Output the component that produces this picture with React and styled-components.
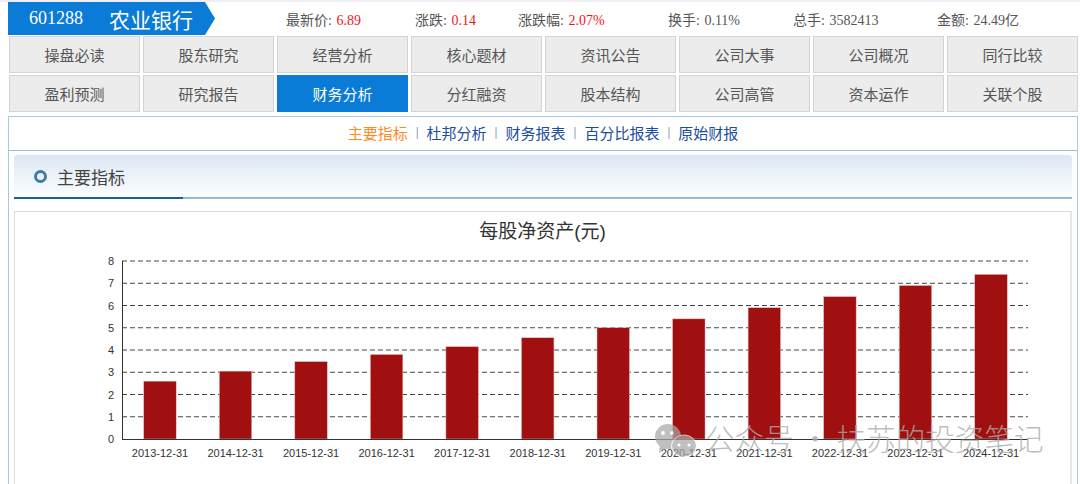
import React from 'react'
import styled, { createGlobalStyle } from 'styled-components'

const tabRows = [
  ['操盘必读', '股东研究', '经营分析', '核心题材', '资讯公告', '公司大事', '公司概况', '同行比较'],
  ['盈利预测', '研究报告', '财务分析', '分红融资', '股本结构', '公司高管', '资本运作', '关联个股'],
]
const stats = [
  { label: '最新价', value: '6.89', red: true, width: 129 },
  { label: '涨跌', value: '0.14', red: true, width: 103 },
  { label: '涨跌幅', value: '2.07%', red: true, width: 150 },
  { label: '换手', value: '0.11%', width: 125 },
  { label: '总手', value: '3582413', width: 144 },
  { label: '金额', value: '24.49亿', width: 120 },
]
const subLinks = ['主要指标', '杜邦分析', '财务报表', '百分比报表', '原始财报']
const bars = [
  ['2013-12-31', 2.6], ['2014-12-31', 3.05], ['2015-12-31', 3.48], ['2016-12-31', 3.8],
  ['2017-12-31', 4.15], ['2018-12-31', 4.55], ['2019-12-31', 5.0], ['2020-12-31', 5.4],
  ['2021-12-31', 5.9], ['2022-12-31', 6.4], ['2023-12-31', 6.9], ['2024-12-31', 7.4],
]

function Chart() {
  const zero = 189
  const step = 22.25
  return (
    <ChartSvg width="1056" height="220" viewBox="0 0 1056 220">
      {[1, 2, 3, 4, 5, 6, 7, 8].map((n) => (
        <line key={n} x1="107" x2="1013" y1={zero - n * step} y2={zero - n * step} stroke="#444" strokeWidth="1" strokeDasharray="5 3" />
      ))}
      {bars.map(([date, v], i) => (
        <g key={date}>
          <rect x={128.7 + i * 75.55} y={zero - v * step} width="32.5" height={v * step} fill="#a01010" stroke="#e8c4c4" strokeWidth="0.5" />
          <AxisText x={145 + i * 75.55} y="207" textAnchor="middle">{date}</AxisText>
        </g>
      ))}
      <line x1="107.5" x2="107.5" y1={zero - 8 * step} y2={zero} stroke="#333" strokeWidth="1" />
      <line x1="107" x2="1013" y1={zero + 0.5} y2={zero + 0.5} stroke="#333" strokeWidth="1" />
      {[0, 1, 2, 3, 4, 5, 6, 7, 8].map((n) => (
        <AxisText key={n} x="99" y={zero - n * step + 4} textAnchor="end">{n}</AxisText>
      ))}
    </ChartSvg>
  )
}

function App() {
  return (
    <>
      <GlobalStyle />
      <Page>
        <TopStrip />
        <Header>
          <Flag>
            <Code>601288</Code>
            <Name>农业银行</Name>
          </Flag>
          <Stats>
            {stats.map((s) => (
              <Stat key={s.label} $width={s.width}>
                {s.label}: <StatValue $red={s.red}>{s.value}</StatValue>
              </Stat>
            ))}
          </Stats>
        </Header>
        <Tabs>
          {tabRows.flat().map((t) => (
            <Tab key={t} $active={t === '财务分析'}>{t}</Tab>
          ))}
        </Tabs>
        <Content>
          <SubNav>
            {subLinks.map((l, i) => (
              <React.Fragment key={l}>
                {i > 0 && <Sep>|</Sep>}
                <SubLink $active={i === 0}>{l}</SubLink>
              </React.Fragment>
            ))}
          </SubNav>
          <Section>
            <SectionHead>
              <Ring />
              <SectionTitle>主要指标</SectionTitle>
            </SectionHead>
            <ChartPanel>
              <ChartTitle>每股净资产(元)</ChartTitle>
              <Chart />
            </ChartPanel>
          </Section>
        </Content>
        <Watermark>
          <WeChatMark width="44" height="37" viewBox="0 0 44 37">
            <ellipse cx="14" cy="15.5" rx="13" ry="12.5" fill="#a8a8a8" />
            <path d="M6 24 L5 32 L13 27 Z" fill="#a8a8a8" />
            <ellipse cx="30" cy="25" rx="12.5" ry="11" fill="#a8a8a8" stroke="#fff" strokeWidth="1" />
            <circle cx="9" cy="12" r="1.9" fill="#fff" />
            <circle cx="18" cy="12" r="1.9" fill="#fff" />
            <circle cx="25" cy="24" r="1.6" fill="#fff" />
            <circle cx="35" cy="24" r="1.6" fill="#fff" />
          </WeChatMark>
          <WatermarkText>公众号 · 扶苏的投资笔记</WatermarkText>
        </Watermark>
      </Page>
    </>
  )
}

const GlobalStyle = createGlobalStyle`
  html, body {
    margin: 0;
    padding: 0;
    background: #fff;
  }
`

const cjkSerif = `"Liberation Serif", "Noto Sans CJK SC", serif`
const cjkSans = `"Liberation Sans", "Noto Sans CJK SC", sans-serif`

const Page = styled.div`
  position: relative;
  width: 1080px;
  height: 484px;
  overflow: hidden;
  font-family: ${cjkSerif};
  background: #fff;
`

const TopStrip = styled.div`
  height: 2px;
  background: #eef0f5;
`

const Header = styled.div`
  display: flex;
  height: 33px;
  padding-left: 8px;
`

const Flag = styled.div`
  display: flex;
  align-items: center;
  width: 207px;
  height: 33px;
  padding-left: 21px;
  box-sizing: border-box;
  background: #0a7bd6;
  color: #fff;
  clip-path: polygon(0 0, 197px 0, 207px 50%, 197px 100%, 0 100%);
`

const Code = styled.span`
  width: 80px;
  font-size: 18px;
`

const Name = styled.span`
  font-size: 21px;
  white-space: nowrap;
`

const Stats = styled.div`
  display: flex;
  align-items: center;
  margin-left: 71px;
  height: 33px;
`

const Stat = styled.div`
  width: ${(p) => p.$width}px;
  font-size: 14px;
  word-spacing: 1px;
  color: #555;
  white-space: nowrap;
`

const StatValue = styled.span`
  color: ${(p) => (p.$red ? '#f0141e' : '#555')};
`

const Tabs = styled.div`
  display: grid;
  grid-template-columns: repeat(8, 131px);
  grid-auto-rows: 37px;
  gap: 2px 3px;
  padding: 1px 0 0 9px;
`

const Tab = styled.div`
  display: flex;
  align-items: center;
  justify-content: center;
  padding-bottom: 1px;
  font-size: 15px;
  box-sizing: border-box;
  color: ${(p) => (p.$active ? '#fff' : '#555')};
  background: ${(p) => (p.$active ? '#0a7bd6' : '#ececec')};
  border: 1px solid ${(p) => (p.$active ? '#0a7bd6' : '#d4d4d4')};
`

const Content = styled.div`
  margin: 4px 2px 0 8px;
  height: 400px;
  box-sizing: border-box;
  border: 1px solid #a5cbe0;
`

const SubNav = styled.div`
  display: flex;
  align-items: center;
  justify-content: center;
  gap: 8.25px;
  height: 31px;
  padding-bottom: 2px;
  border-bottom: 1px solid #95c0d8;
  font-size: 15px;
`

const SubLink = styled.span`
  color: ${(p) => (p.$active ? '#ff8a1e' : '#1c4e9c')};
`

const Sep = styled.span`
  color: #3a5f90;
  font-size: 12px;
`

const Section = styled.div`
  padding: 4px 5px 0;
`

const SectionHead = styled.div`
  position: relative;
  display: flex;
  align-items: center;
  height: 42px;
  padding-left: 20px;
  background: linear-gradient(#dce7f3, #fbfdfe);
  border-bottom: 2px solid #8fbcd6;
  border-radius: 3px 3px 0 0;

  &::after {
    content: "";
    position: absolute;
    left: 0;
    bottom: -2px;
    width: 169px;
    height: 2px;
    background: #1a5f8f;
  }
`

const Ring = styled.span`
  width: 7px;
  height: 7px;
  border: 3px solid #3f7da6;
  border-radius: 50%;
`

const SectionTitle = styled.span`
  margin-left: 10px;
  font-size: 17px;
  color: #444;
`

const ChartPanel = styled.div`
  margin-top: 12px;
  height: 300px;
  box-sizing: border-box;
  border: 1px solid #ddd;
  border-right: 2px solid #e6e6e6;
`

const ChartTitle = styled.div`
  height: 38px;
  padding-top: 7px;
  box-sizing: border-box;
  text-align: center;
  font-family: ${cjkSans};
  font-size: 19px;
  line-height: 26px;
  color: #333;
`

const ChartSvg = styled.svg`
  display: block;
`

const AxisText = styled.text`
  font-family: "Liberation Sans", sans-serif;
  font-size: 11px;
  fill: #333;
`

const Watermark = styled.div`
  position: absolute;
  left: 654px;
  top: 418px;
  display: flex;
  align-items: center;
  gap: 7px;
`

const WeChatMark = styled.svg`
  margin-top: 2px;
  opacity: 0.72;
`

const WatermarkText = styled.span`
  font-family: "Noto Sans CJK SC", sans-serif;
  font-size: 29.6px;
  font-weight: 300;
  line-height: 40px;
  color: rgba(172, 172, 172, 0.8);
  white-space: nowrap;
`

export default App
